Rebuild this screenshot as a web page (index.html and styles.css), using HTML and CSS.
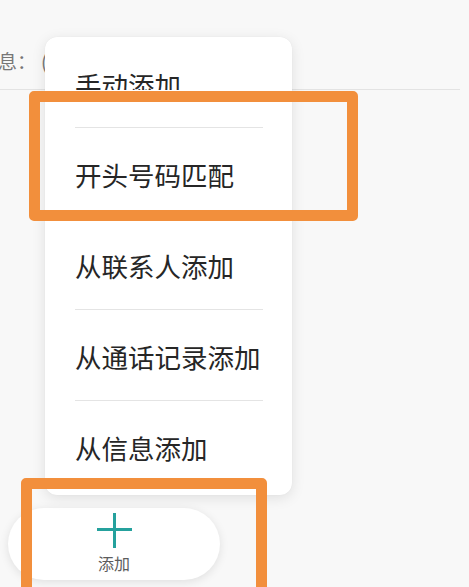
FILE: index.html
```html
<!DOCTYPE html>
<html lang="zh-CN">
<head>
<meta charset="utf-8">
<link rel="stylesheet" href="styles.css">
</head>
<body>
<div class="page">
  <div class="info-row"><span class="info-text">息：<span class="paren">(</span></span></div>
  <div class="spacer"></div>
  <div class="bottom-bar">
    <button class="add-btn">
      <svg class="plus" width="35" height="35" viewBox="0 0 35 35" aria-hidden="true">
        <line x1="17.5" y1="0" x2="17.5" y2="35" />
        <line x1="0" y1="16.5" x2="35" y2="16.5" />
      </svg>
      <span class="add-label">添加</span>
    </button>
  </div>
</div>

<div class="menu">
  <div class="menu-item first"><span class="clip">手动添加</span></div>
  <div class="menu-item">开头号码匹配</div>
  <div class="menu-item">从联系人添加</div>
  <div class="menu-item">从通话记录添加</div>
  <div class="menu-item">从信息添加</div>
</div>

<div class="mark mark-top"></div>
<div class="mark mark-bottom"></div>
</body>
</html>
```

FILE: styles.css
```css
html, body {
  margin: 0;
  padding: 0;
}
body {
  width: 469px;
  height: 587px;
  overflow: hidden;
  position: relative;
  background: #f8f8f8;
  font-family: "Noto Sans CJK SC", "Noto Sans", sans-serif;
}
.page {
  height: 587px;
  display: flex;
  flex-direction: column;
}
.info-row {
  height: 90px;
  box-sizing: border-box;
  padding-top: 51px;
  margin-right: 9px;
  border-bottom: 1px solid #e3e3e3;
}
.info-text {
  display: block;
  margin-left: -2px;
  font-size: 19px;
  line-height: 1;
  color: #777;
  white-space: nowrap;
}
.paren {
  margin-left: 5px;
}
.spacer {
  flex: 1;
}
.bottom-bar {
  padding: 0 0 7px 8px;
}
.add-btn {
  width: 212px;
  height: 72px;
  box-sizing: border-box;
  border: none;
  border-radius: 36px;
  background: #ffffff;
  box-shadow: 0 2px 10px rgba(0, 0, 0, 0.10);
  display: flex;
  flex-direction: column;
  align-items: center;
  padding: 5px 0 0;
  font-family: inherit;
}
.plus line {
  stroke: #25a19d;
  stroke-width: 3;
}
.plus {
  display: block;
}
.add-label {
  margin-top: 7px;
  font-size: 16px;
  line-height: 1;
  color: #5c5c5c;
}

.menu {
  position: absolute;
  left: 45px;
  top: 37px;
  width: 247px;
  height: 458px;
  background: #ffffff;
  border-radius: 12px;
  box-shadow: 0 3px 14px rgba(0, 0, 0, 0.10), 0 0 1px rgba(0, 0, 0, 0.08);
  overflow: hidden;
}
.menu-item {
  height: 91px;
  margin: 0 29px 0 30px;
  box-sizing: border-box;
  border-top: 1px solid #e4e4e4;
  display: flex;
  align-items: center;
  padding-top: 4px;
  font-size: 26.5px;
  line-height: 1;
  color: #262626;
  white-space: nowrap;
}
.menu-item.first {
  height: 90px;
  border-top: none;
  align-items: flex-start;
  padding-top: 35px;
}
.clip {
  display: block;
  height: 18px;
  overflow: hidden;
}

.mark {
  position: absolute;
  box-sizing: border-box;
  border: 11px solid #f28f3c;
  border-radius: 5px;
}
.mark-top {
  left: 29px;
  top: 91px;
  width: 329px;
  height: 130px;
}
.mark-bottom {
  left: 21px;
  top: 478px;
  width: 246px;
  height: 130px;
}
```
